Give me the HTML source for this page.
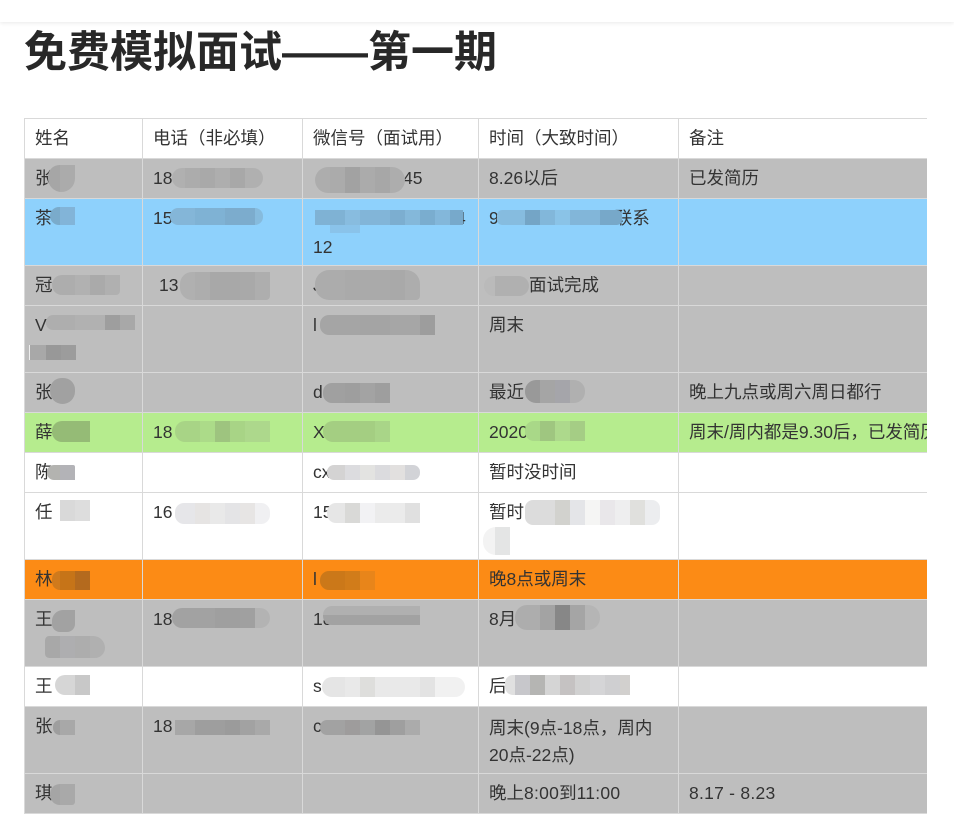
<!DOCTYPE html>
<html lang="zh">
<head>
<meta charset="utf-8">
<title>免费模拟面试——第一期</title>
<style>
html,body{margin:0;padding:0;background:#fff;width:954px;height:827px;overflow:hidden}
body{position:relative;font-family:"Liberation Sans","Noto Sans CJK SC",sans-serif;color:#333}
.top{position:absolute;left:0;top:0;width:954px;height:22px;background:#fff;box-shadow:0 1px 4px rgba(0,0,0,.09)}
h1{position:absolute;left:24px;top:23px;margin:0;font-size:43px;line-height:60px;font-weight:700;color:#282828;white-space:nowrap}
.wrap{position:absolute;left:24px;top:118px;width:903px;height:697px;overflow:hidden}
table{border-collapse:collapse;table-layout:fixed;width:1200px;font-size:17.5px}
td{border:1px solid #d9d9d9;padding:5px 10px 6px;line-height:28px;vertical-align:top;white-space:nowrap;overflow:hidden;color:#333}
.h{height:28px}.d{height:56px}
tr.dd td{padding-bottom:5px}
.g{background:#bebebe}.b{background:#8ed1fc}.n{background:#b6ec8e}.o{background:#fc8b15}.w{background:#fff}
.m{position:absolute}
.r{position:relative;top:1px}
.l{letter-spacing:.25px}
</style>
</head>
<body>
<div class="top"></div>
<h1>免费模拟面试——第一期</h1>
<div class="wrap">
<table>
<colgroup><col style="width:118px"><col style="width:160px"><col style="width:176px"><col style="width:200px"><col style="width:546px"></colgroup>
<tr class="w"><td class="h">姓名</td><td>电话（非必填）</td><td>微信号（面试用）</td><td>时间（大致时间）</td><td>备注</td></tr>
<tr class="g"><td class="h">张</td><td>18</td><td style="padding-left:100px">45</td><td>8.26以后</td><td>已发简历</td></tr>
<tr class="b dd"><td class="d">茶</td><td>15</td><td><span style="display:block;padding-left:143px;height:28px">4</span><span class="r">12</span></td><td>9<span style="padding-left:116px">联系</span></td><td></td></tr>
<tr class="g"><td class="h">冠</td><td style="padding-left:16px">13</td><td>J</td><td style="padding-left:50px">面试完成</td><td></td></tr>
<tr class="g dd"><td class="d">V</td><td></td><td>l</td><td>周末</td><td></td></tr>
<tr class="g"><td class="h">张</td><td></td><td>d</td><td>最近</td><td>晚上九点或周六周日都行</td></tr>
<tr class="n"><td class="h">薛</td><td>18</td><td>X</td><td>2020</td><td>周末/周内都是9.30后，已发简历</td></tr>
<tr class="w"><td class="h">陈</td><td></td><td>cx</td><td>暂时没时间</td><td></td></tr>
<tr class="w dd"><td class="d">任</td><td>16</td><td>15</td><td>暂时</td><td></td></tr>
<tr class="o"><td class="h">林</td><td></td><td>l</td><td>晚8点或周末</td><td></td></tr>
<tr class="g dd"><td class="d">王</td><td>18</td><td>18</td><td>8月</td><td></td></tr>
<tr class="w"><td class="h">王</td><td></td><td>s</td><td>后</td><td></td></tr>
<tr class="g dd"><td class="d">张</td><td>18</td><td>c</td><td><span class="r" style="top:2px">周末(9点-18点，周内</span><br><span class="r">20点-22点)</span></td><td></td></tr>
<tr class="g"><td class="h">琪</td><td></td><td></td><td>晚上<span class="l">8:00</span>到<span class="l">11:00</span></td><td class="l">8.17 - 8.23</td></tr>
</table>
</div>

<!-- mosaic redaction patches -->
<div class="m" style="left:48px;top:165px;width:27px;height:27px;border-radius:12px 0 14px 14px;background:linear-gradient(90deg,#a6a6a6 0 12px,#ababab 12px)"></div>
<div class="m" style="left:172px;top:168px;width:91px;height:20px;border-radius:10px;background:linear-gradient(90deg,#b0b0b0 0 13px,#acacac 13px 28px,#a9a9a9 28px 43px,#aeaeae 43px 58px,#a8a8a8 58px 73px,#b0b0b0 73px)"></div>
<div class="m" style="left:315px;top:167px;width:90px;height:26px;border-radius:13px;background:linear-gradient(90deg,#adadad 0 15px,#ababab 15px 30px,#a2a2a2 30px 45px,#ababab 45px 60px,#a7a7a7 60px 75px,#adadad 75px)"></div>

<div class="m" style="left:50px;top:207px;width:25px;height:18px;border-radius:9px 0 0 9px;background:linear-gradient(90deg,#7aabcb 0 10px,#82b4d8 10px)"></div>
<div class="m" style="left:170px;top:208px;width:93px;height:17px;border-radius:8px;background:linear-gradient(90deg,#84b6d8 0 25px,#7fb2d4 25px 55px,#7caccd 55px 85px,#86bbdd 85px)"></div>
<div class="m" style="left:315px;top:210px;width:148px;height:15px;background:linear-gradient(90deg,#7fb2d4 0 30px,#88bcdf 30px 45px,#82b5d8 45px 75px,#7caed0 75px 90px,#84b8da 90px 105px,#7aadcf 105px 120px,#83b7da 120px 135px,#77a9cb 135px)"></div>
<div class="m" style="left:330px;top:225px;width:30px;height:8px;background:#8ac3ea"></div>
<div class="m" style="left:497px;top:210px;width:125px;height:15px;border-radius:5px;background:linear-gradient(90deg,#86bcdf 0 28px,#74a5c6 28px 43px,#82b7da 43px 58px,#8ac3e7 58px 73px,#82b6d9 73px 103px,#77a8c9 103px)"></div>

<div class="m" style="left:52px;top:275px;width:68px;height:20px;border-radius:10px 0 4px 10px;background:linear-gradient(90deg,#adadad 0 23px,#b1b1b1 23px 38px,#aaaaaa 38px 53px,#b0b0b0 53px)"></div>
<div class="m" style="left:180px;top:272px;width:90px;height:28px;border-radius:12px 0 4px 12px;background:linear-gradient(90deg,#b0b0b0 0 15px,#adadad 15px 30px,#a8a8a8 30px 60px,#a9a9a9 60px 75px,#aeaeae 75px)"></div>
<div class="m" style="left:315px;top:270px;width:105px;height:30px;border-radius:14px 14px 4px 14px;background:linear-gradient(90deg,#acacac 0 30px,#aaaaaa 30px 75px,#a9a9a9 75px 90px,#adadad 90px)"></div>
<div class="m" style="left:484px;top:276px;width:45px;height:20px;border-radius:10px;background:linear-gradient(90deg,#bababa 0 11px,#b0b0b0 11px)"></div>

<div class="m" style="left:46px;top:315px;width:89px;height:15px;border-radius:7px 0 0 7px;background:linear-gradient(90deg,#aeaeae 0 29px,#b1b1b1 29px 59px,#9e9e9e 59px 74px,#a8a8a8 74px)"></div>
<div class="m" style="left:29px;top:345px;width:46px;height:15px;background:linear-gradient(90deg,#a8a8a8 0 16px,#989898 16px 31px,#9c9c9c 31px);border-left:1px solid #eee"></div>
<div class="m" style="left:320px;top:315px;width:115px;height:20px;border-radius:9px 0 0 9px;background:linear-gradient(90deg,#a5a5a5 0 40px,#a4a4a4 40px 70px,#a6a6a6 70px 100px,#9d9d9d 100px)"></div>

<div class="m" style="left:50px;top:378px;width:25px;height:26px;border-radius:12px 12px 13px 13px;background:#a1a1a1"></div>
<div class="m" style="left:323px;top:383px;width:67px;height:20px;border-radius:9px 0 0 9px;background:linear-gradient(90deg,#a0a0a0 0 22px,#9e9e9e 22px 37px,#a3a3a3 37px 52px,#9e9e9e 52px)"></div>
<div class="m" style="left:525px;top:380px;width:60px;height:23px;border-radius:11px;background:linear-gradient(90deg,#999 0 15px,#a5a5a5 15px 30px,#a5a5aa 30px 45px,#b0b0b0 45px)"></div>

<div class="m" style="left:52px;top:421px;width:38px;height:21px;border-radius:10px 0 0 10px;background:#95bb76"></div>
<div class="m" style="left:175px;top:421px;width:95px;height:21px;border-radius:10px 0 0 10px;background:linear-gradient(90deg,#a8d486 0 25px,#acdb89 25px 40px,#9ec47f 40px 55px,#a8d486 55px 70px,#add88c 70px)"></div>
<div class="m" style="left:323px;top:421px;width:67px;height:21px;border-radius:10px 0 0 10px;background:linear-gradient(90deg,#a4ce82 0 52px,#a9d588 52px)"></div>
<div class="m" style="left:525px;top:421px;width:60px;height:20px;border-radius:9px 0 0 9px;background:linear-gradient(90deg,#a9d888 0 15px,#9fc680 15px 30px,#add98c 30px 45px,#a5cd85 45px)"></div>

<div class="m" style="left:47px;top:465px;width:28px;height:15px;border-radius:7px 2px 0 7px;background:linear-gradient(90deg,#b3b3b0 0 13px,#b3b3b7 13px)"></div>
<div class="m" style="left:327px;top:465px;width:93px;height:15px;border-radius:7px;background:linear-gradient(90deg,#d4d3d3 0 18px,#dcdcdf 18px 33px,#e3e3e1 33px 48px,#dbdbde 48px 63px,#e2e0df 63px 78px,#d2d3d7 78px)"></div>

<div class="m" style="left:60px;top:500px;width:30px;height:21px;background:linear-gradient(90deg,#d9d9d9 0 15px,#dddddd 15px)"></div>
<div class="m" style="left:175px;top:503px;width:95px;height:21px;border-radius:9px;background:linear-gradient(90deg,#e6e6e9 0 20px,#e6e4e3 20px 35px,#e9e9e9 35px 50px,#e4e4e6 50px 65px,#e7e5e4 65px 80px,#f0f0f2 80px)"></div>
<div class="m" style="left:327px;top:503px;width:93px;height:20px;border-radius:9px 0 0 9px;background:linear-gradient(90deg,#e6e6e6 0 18px,#d9d9d7 18px 33px,#f2f2f4 33px 48px,#ebebeb 48px 78px,#e0e0e0 78px)"></div>
<div class="m" style="left:525px;top:500px;width:135px;height:25px;border-radius:8px;background:linear-gradient(90deg,#dcdcdc 0 30px,#d2d2ce 30px 45px,#e4e5e8 45px 60px,#f5f5f4 60px 75px,#e9e7ea 75px 90px,#eeeeef 90px 105px,#e0e0dd 105px 120px,#ecedef 120px)"></div>
<div class="m" style="left:483px;top:527px;width:27px;height:28px;border-radius:13px 0 0 13px;background:linear-gradient(90deg,#f3f3f3 0 12px,#e4e5e5 12px)"></div>

<div class="m" style="left:52px;top:571px;width:38px;height:19px;border-radius:8px 0 0 8px;background:linear-gradient(90deg,#d07a1c 0 8px,#c67418 8px 23px,#b46a1e 23px)"></div>
<div class="m" style="left:320px;top:571px;width:55px;height:19px;border-radius:9px 0 0 9px;background:linear-gradient(90deg,#cb7819 0 25px,#d17c1a 25px 40px,#e8851a 40px)"></div>

<div class="m" style="left:52px;top:610px;width:23px;height:22px;border-radius:11px 0 8px 8px;background:#a2a2a2"></div>
<div class="m" style="left:172px;top:608px;width:98px;height:20px;border-radius:10px;background:linear-gradient(90deg,#a2a2a2 0 43px,#9f9f9f 43px 68px,#a0a0a0 68px 83px,#b3b3b3 83px)"></div>
<div class="m" style="left:45px;top:636px;width:60px;height:22px;border-radius:5px 14px 12px 5px;background:linear-gradient(90deg,#a8a8a8 0 15px,#aeaeb0 15px 30px,#adadad 30px 45px,#b0b0b0 45px)"></div>
<div class="m" style="left:323px;top:606px;width:97px;height:19px;border-radius:9px 0 0 9px;background:linear-gradient(180deg,#b0b0b0 0 9px,#a2a2a2 9px)"></div>
<div class="m" style="left:515px;top:605px;width:85px;height:25px;border-radius:12px;background:linear-gradient(90deg,#adadad 0 25px,#a3a3a3 25px 40px,#878787 40px 55px,#a5a5a5 55px 70px,#b5b5b5 70px)"></div>

<div class="m" style="left:55px;top:675px;width:35px;height:20px;border-radius:10px 0 0 10px;background:linear-gradient(90deg,#d6d6d6 0 20px,#c8c8c8 20px)"></div>
<div class="m" style="left:322px;top:677px;width:143px;height:20px;border-radius:10px;background:linear-gradient(90deg,#e5e5e5 0 23px,#e9e9e9 23px 38px,#dededc 38px 53px,#e9e9e9 53px 98px,#e3e3e3 98px 113px,#f1f1f1 113px)"></div>
<div class="m" style="left:505px;top:675px;width:125px;height:20px;border-radius:8px 0 0 8px;background:linear-gradient(90deg,#e0e0e0 0 10px,#c7c7cb 10px 25px,#b5b5b3 25px 40px,#d5d5d5 40px 55px,#c5c2c2 55px 70px,#d1d1d1 70px 85px,#d5d5d7 85px 100px,#cfcfd1 100px 115px,#d2d0ce 115px)"></div>

<div class="m" style="left:53px;top:720px;width:22px;height:15px;border-radius:7px 0 0 7px;background:linear-gradient(90deg,#9e9e9e 0 7px,#a8a8a8 7px)"></div>
<div class="m" style="left:175px;top:720px;width:95px;height:15px;background:linear-gradient(90deg,#a7a7a7 0 20px,#9e9e9e 20px 50px,#9b9b9b 50px 65px,#a2a2a2 65px 80px,#a9a9a9 80px)"></div>
<div class="m" style="left:320px;top:720px;width:100px;height:15px;border-radius:7px 0 0 7px;background:linear-gradient(90deg,#a2a2a2 0 25px,#9e9c9c 25px 40px,#a2a3a3 40px 55px,#959595 55px 70px,#9f9f9f 70px 85px,#ababab 85px)"></div>

<div class="m" style="left:50px;top:784px;width:25px;height:21px;border-radius:10px 0 3px 10px;background:linear-gradient(90deg,#a5a5a5 0 10px,#a9a9a9 10px)"></div>
</body>
</html>
